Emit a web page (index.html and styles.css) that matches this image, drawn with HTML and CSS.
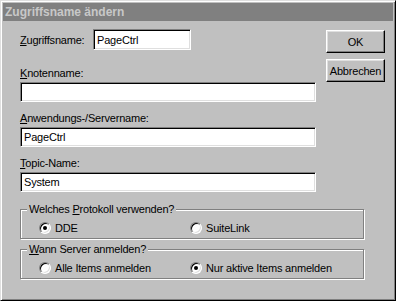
FILE: index.html
```html
<!DOCTYPE html>
<html lang="de">
<head>
    <meta charset="UTF-8">
    <title>Zugriffsname ändern</title>
    <link rel="stylesheet" href="styles.css">
</head>
<body>
    <div class="window">
        <div class="titlebar">Zugriffsname ändern</div>
        <div class="client">
            <div class="top">
                <div class="fields">
                    <div class="row-inline">
                        <label for="access" class="label-inline"><u>Z</u>ugriffsname:</label>
                        <input type="text" id="access" class="edit edit-short" value="PageCtrl">
                    </div>
                    <div class="field field-first">
                        <label for="node"><u>K</u>notenname:</label>
                        <input type="text" id="node" class="edit" value="">
                    </div>
                    <div class="field">
                        <label for="app"><u>A</u>nwendungs-/Servername:</label>
                        <input type="text" id="app" class="edit" value="PageCtrl">
                    </div>
                    <div class="field">
                        <label for="topic"><u>T</u>opic-Name:</label>
                        <input type="text" id="topic" class="edit" value="System">
                    </div>
                </div>
                <div class="buttons">
                    <button class="btn">OK</button>
                    <button class="btn">Abbrechen</button>
                </div>
            </div>
            <div class="group group-first">
                <span class="legend">Welches <u>P</u>rotokoll verwenden?</span>
                <div class="options">
                    <div class="option"><span class="radio checked"></span>DDE</div>
                    <div class="option"><span class="radio"></span>SuiteLink</div>
                </div>
            </div>
            <div class="group">
                <span class="legend"><u>W</u>ann Server anmelden?</span>
                <div class="options">
                    <div class="option"><span class="radio"></span>Alle Items anmelden</div>
                    <div class="option"><span class="radio checked"></span>Nur aktive Items anmelden</div>
                </div>
            </div>
        </div>
    </div>
</body>
</html>
```

FILE: styles.css
```css
body {
    margin: 0;
    font-family: "Liberation Sans", Arial, sans-serif;
    font-size: 11px;
    letter-spacing: -0.2px;
    color: #000;
    background: #c0c0c0;
}
.window {
    width: 396px;
    height: 301px;
    box-sizing: border-box;
    border: 1px solid;
    border-color: #dfdfdf #000 #000 #dfdfdf;
    box-shadow: inset 1px 1px #fff, inset -1px -1px #808080;
    padding: 2px;
    background: #c0c0c0;
}
.titlebar {
    height: 18px;
    line-height: 18px;
    background: #808080;
    color: #c8c8c8;
    font-weight: bold;
    font-size: 12px;
    letter-spacing: 0;
    padding-left: 2px;
}
.client {
    padding: 8px 0 0 17px;
}
.top {
    display: flex;
    gap: 10px;
}
.fields {
    width: 296px;
}
.row-inline {
    display: flex;
    align-items: center;
    height: 21px;
}
.label-inline {
    width: 73px;
}
.field {
    margin-top: 9px;
}
.field-first {
    margin-top: 16px;
}
.field label {
    display: block;
    height: 14px;
    line-height: 14px;
    margin-bottom: 2px;
}
.edit {
    display: block;
    width: 296px;
    height: 20px;
    box-sizing: border-box;
    border: 1px solid;
    border-color: #808080 #fff #fff #808080;
    box-shadow: inset 1px 1px #000, inset -1px -1px #dfdfdf;
    padding: 0 3px;
    margin: 0;
    background: #fff;
    font: inherit;
    letter-spacing: inherit;
    outline: none;
}
.edit-short {
    width: 98px;
    height: 21px;
}
.buttons {
    display: flex;
    flex-direction: column;
    gap: 6px;
    margin-top: 1px;
}
.btn {
    width: 59px;
    height: 23px;
    box-sizing: border-box;
    border: 1px solid;
    border-color: #fff #000 #000 #fff;
    box-shadow: inset -1px -1px #808080, inset 1px 1px #dfdfdf;
    background: #c0c0c0;
    padding: 0;
    font: inherit;
    letter-spacing: inherit;
    color: #000;
}
.group {
    display: flex;
    flex-direction: column;
    width: 344px;
    height: 30px;
    box-sizing: border-box;
    border: 1px solid #808080;
    box-shadow: inset 1px 1px #fff, 1px 1px #fff;
    margin-top: 10px;
}
.group-first {
    margin-top: 17px;
}
.legend {
    align-self: flex-start;
    margin: -8px 0 0 6px;
    padding: 0 2px;
    height: 14px;
    line-height: 14px;
    background: #c0c0c0;
}
.options {
    display: grid;
    grid-template-columns: 151px auto;
    padding-left: 18px;
    margin-top: 5px;
}
.option {
    display: flex;
    align-items: center;
    gap: 4px;
    height: 14px;
}
.radio {
    display: flex;
    align-items: center;
    justify-content: center;
    width: 12px;
    height: 12px;
    box-sizing: border-box;
    border-radius: 50%;
    border: 1px solid;
    border-color: #808080 #fff #fff #808080;
    box-shadow: inset 1px 1px #000, inset -1px -1px #dfdfdf;
    background: #fff;
}
.radio.checked::after {
    content: "";
    width: 4px;
    height: 4px;
    border-radius: 50%;
    background: #000;
}
```
